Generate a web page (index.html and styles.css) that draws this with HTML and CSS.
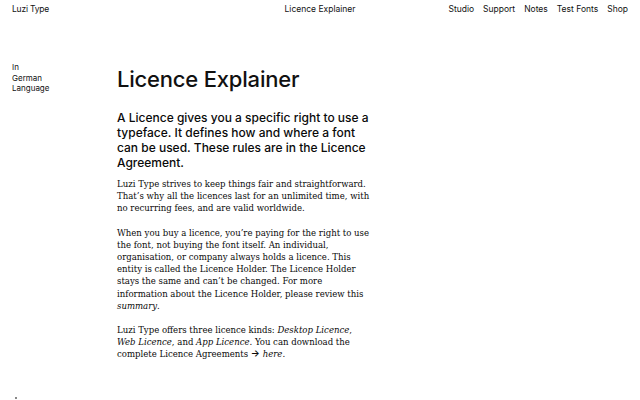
FILE: index.html
```html
<!DOCTYPE html>
<html lang="en">
<head>
<meta charset="utf-8">
<title>Licence Explainer</title>
<link rel="stylesheet" href="styles.css">
</head>
<body>
<header class="topbar">
  <a class="brand" href="#">Luzi Type</a>
  <span class="title">Licence Explainer</span>
  <nav class="menu">
    <a href="#">Studio</a>
    <a href="#">Support</a>
    <a href="#">Notes</a>
    <a href="#">Test Fonts</a>
    <a href="#">Shop</a>
  </nav>
</header>
<main class="layout">
  <aside class="side">
    <a href="#">In<br>German<br>Language</a>
  </aside>
  <article class="content">
    <h1>Licence Explainer</h1>
    <p class="lead">A Licence gives you a specific right to use a typeface. It defines how and where a font can be used. These rules are in the Licence Agreement.</p>
    <p>Luzi Type strives to keep things fair and straightforward. That’s why all the licences last for an unlimited time, with no recurring fees, and are valid worldwide.</p>
    <p>When you buy a licence, you’re paying for the right to use the font, not buying the font itself. An individual, organisation, or company always holds a licence. This entity is called the Licence Holder. The Licence Holder stays the same and can’t be changed. For more information about the Licence Holder, please review this <em>summary</em>.</p>
    <p>Luzi Type offers three licence kinds: <em>Desktop Licence</em>, <em>Web Licence</em>, and <em>App Licence</em>. You can download the complete Licence Agreements <span class="arrow">→</span> <em>here</em>.</p>
  </article>
</main>
<div class="footmark"></div>
</body>
</html>
```
FILE: styles.css
```css
html, body { margin: 0; padding: 0; background: #fff; color: #111; }
body { font-family: "Inter", "Liberation Sans", sans-serif; height: 400px; overflow: hidden; }
a { color: inherit; text-decoration: none; }
.topbar {
  display: grid;
  grid-template-columns: 1fr auto 1fr;
  align-items: center;
  padding: 2px 12px 0 12px;
  height: 14px;
  font-size: 8.5px;
}
.brand { justify-self: start; letter-spacing: -0.2px; }
.title { justify-self: center; }
.menu { justify-self: end; display: flex; gap: 9px; }
.layout {
  display: grid;
  grid-template-columns: 105px 254px;
  padding: 48px 12px 0 12px;
}
.side { font-size: 8px; line-height: 10.5px; padding-top: 0; margin-top: -2px; }
.content h1 {
  margin: 0;
  font-weight: 500;
  font-size: 22px;
  line-height: 30px;
  letter-spacing: -0.2px;
}
.content .lead {
  font-family: "Inter", "Liberation Sans", sans-serif;
  font-size: 12px;
  line-height: 15px;
  font-weight: 500;
  margin: 16px 0 8px 0;
}
.content p {
  font-family: "DejaVu Serif Condensed", "DejaVu Serif", serif;
  font-stretch: condensed;
  font-size: 9.5px;
  line-height: 12.2px;
  margin: 0 0 12px 0;
  color: #0a0a0a;
}
.arrow { font-family: "Inter", "DejaVu Sans", sans-serif; font-weight: 600; font-size: 9.5px; }
.footmark { position: absolute; left: 15px; top: 397px; width: 2px; height: 2px; background: #888; }
```
